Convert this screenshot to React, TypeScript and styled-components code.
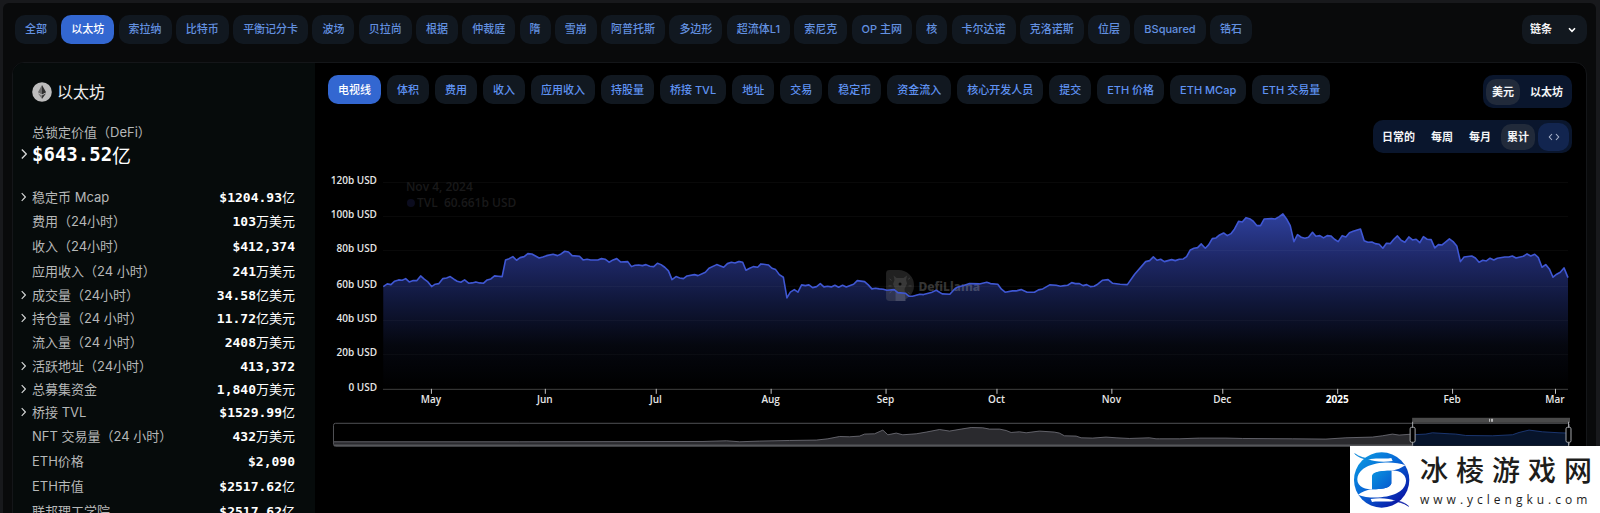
import React from "react";
import styled, { createGlobalStyle, css } from "styled-components";

const sans = `Inter, "Noto Sans CJK SC", sans-serif`;
const chartFont = `"Open Sans", "Noto Sans", sans-serif`;
const mono = `"DejaVu Sans Mono", "Noto Sans CJK SC", monospace`;

const GlobalStyle = createGlobalStyle`
  *, *::before, *::after { box-sizing: border-box; }
  body { margin: 0; background: #18191c; font-family: ${sans}; }
  button, select { font: inherit; }
`;

const Page = styled.div`
  height: 100vh;
  overflow: hidden;
  padding: 3px 4px 0 3px;
`;

const Shell = styled.div`
  min-height: 100%;
  padding: 12px 9px 0 9px;
  background: #090a0b;
  border-radius: 6px 6px 0 0;
`;

const TopBar = styled.header`
  display: flex;
  align-items: center;
  justify-content: space-between;
  padding-left: 3px;
`;

const ChainList = styled.nav`
  display: flex;
  justify-content: space-between;
  width: calc(100% - 335px);
  min-width: max-content;
`;

const pill = css`
  display: block;
  height: 29px;
  padding: 0 10px;
  border: 0;
  border-radius: 10px;
  font-size: 11px;
  line-height: 28px;
  font-weight: 500;
  white-space: nowrap;
  text-decoration: none;
`;

const ChainLink = styled.a<{ $active?: boolean }>`
  ${pill}
  background: ${(p) => (p.$active ? "#3367d1" : "#111820")};
  color: ${(p) => (p.$active ? "#ffffff" : "#6391e0")};
`;

const MetricButton = styled.button<{ $active?: boolean }>`
  ${pill}
  background: ${(p) => (p.$active ? "#3367d1" : "#111820")};
  color: ${(p) => (p.$active ? "#ffffff" : "#5f92f2")};
`;

const SelectBox = styled.label`
  display: grid;
  align-items: center;
  width: 65px;
  height: 29px;
  border-radius: 10px;
  background: #12181f;
  color: #f2f3f5;
  & > * { grid-area: 1 / 1; }
  svg { justify-self: end; margin-right: 10px; pointer-events: none; }
`;

const Select = styled.select`
  appearance: none;
  width: 100%;
  height: 29px;
  padding: 0 8px 2px;
  border: 0;
  background: transparent;
  color: inherit;
  font-size: 11px;
  font-weight: 600;
`;

const Card = styled.section`
  display: flex;
  margin-top: 18px;
  border: 1px solid #141619;
  border-radius: 12px;
  overflow: hidden;
  background: #000000;
`;

const Sidebar = styled.aside`
  flex: 0 0 302px;
  padding: 17px 20px 24px 8px;
  background: #060b0b;
  color: #b6b8b8;
`;

const ChainTitle = styled.h1`
  display: flex;
  align-items: center;
  gap: 5px;
  margin: 0 0 18px;
  padding-left: 11px;
  font-size: 16px;
  line-height: 24px;
  font-weight: 400;
  color: #eeeeee;
`;

const TvlLabel = styled.div`
  padding-left: 11px;
  font-size: 13px;
  line-height: 20px;
`;

const TvlValue = styled.div`
  display: flex;
  align-items: center;
  height: 24px;
  font-family: ${mono};
  font-size: 19px;
  font-weight: 700;
  color: #ffffff;
`;

const ChevronSlot = styled.span`
  display: flex;
  flex: 0 0 11px;
`;

const StatTable = styled.table`
  width: 100%;
  margin-top: 19px;
  border-collapse: collapse;
  font-size: 13px;
`;

const StatRow = styled.tr<{ $expandable?: boolean }>`
  height: ${(p) => (p.$expandable ? 23 : 25)}px;
`;

const StatName = styled.th`
  padding: 0;
  font-weight: 400;
  text-align: left;
  white-space: nowrap;
  line-height: 20px;
`;

const NameLine = styled.span`
  display: flex;
  align-items: center;
`;

const StatValue = styled.td`
  padding: 3px 0 0;
  font-family: ${mono};
  font-weight: 700;
  line-height: 18px;
  text-align: right;
  color: #ffffff;
  white-space: nowrap;
`;

const Unit = styled.span`
  font-weight: 400;
`;

const Main = styled.main`
  flex: 1;
  min-width: 0;
  padding: 12px 14px 0 13px;
`;

const Controls = styled.div`
  display: flex;
  align-items: flex-start;
  justify-content: space-between;
`;

const MetricList = styled.div`
  display: flex;
  gap: 6px;
`;

const IntervalLine = styled.div`
  display: flex;
  justify-content: flex-end;
  margin: 12px 0 17px;
`;

const ToggleGroup = styled.div`
  display: flex;
  align-items: center;
  height: 33px;
  padding: 0 3px;
  border-radius: 10px;
  background: #0a162d;
`;

const Toggle = styled.button<{ $active?: boolean }>`
  height: 26px;
  padding: 0 6px 2px;
  border: 0;
  border-radius: 10px;
  background: ${(p) => (p.$active ? "#212a3a" : "transparent")};
  color: #f4f5f7;
  font-size: 11px;
  font-weight: 600;
  white-space: nowrap;
  & + & { margin-left: 4px; }
`;

const EmbedButton = styled.button`
  display: flex;
  align-items: center;
  justify-content: center;
  width: 31px;
  height: 28px;
  margin-left: 3px;
  padding: 0;
  border: 0;
  border-radius: 10px;
  background: #12254f;
  color: #a9b4cc;
`;

const ChartSvg = styled.svg`
  display: block;
  width: 100%;
  height: auto;
  font-family: ${chartFont};
`;

const SiteBadge = styled.footer`
  position: fixed;
  right: 0;
  bottom: 0;
  display: flex;
  width: 250px;
  height: 67px;
  background: #ffffff;
  color: #1d1d1b;
`;

const BadgeText = styled.div`
  flex: 1;
  display: flex;
  flex-direction: column;
  padding: 6px 0 0 6px;
  white-space: nowrap;
`;

const BadgeName = styled.div`
  font-size: 28px;
  line-height: 38px;
  font-weight: 500;
  letter-spacing: 8px;
`;

const BadgeUrl = styled.div`
  font-family: "Open Sans", sans-serif;
  font-size: 12px;
  line-height: 20px;
  letter-spacing: 4px;
`;

const chains = [
  "全部", "以太坊", "索拉纳", "比特币", "平衡记分卡", "波场", "贝拉尚", "根据",
  "仲裁庭", "隋", "雪崩", "阿普托斯", "多边形", "超流体L1", "索尼克", "OP 主网",
  "核", "卡尔达诺", "克洛诺斯", "位层", "BSquared", "锆石",
];

const metrics = [
  "电视线", "体积", "费用", "收入", "应用收入", "持股量", "桥接 TVL", "地址", "交易",
  "稳定币", "资金流入", "核心开发人员", "提交", "ETH 价格", "ETH MCap", "ETH 交易量",
];

type Stat = { name: string; value: string; unit?: string; expandable?: boolean };

const stats: Stat[] = [
  { name: "稳定币 Mcap", value: "$1204.93", unit: "亿", expandable: true },
  { name: "费用（24小时）", value: "103", unit: "万美元" },
  { name: "收入（24小时）", value: "$412,374" },
  { name: "应用收入（24 小时）", value: "241", unit: "万美元" },
  { name: "成交量（24小时）", value: "34.58", unit: "亿美元", expandable: true },
  { name: "持仓量（24 小时）", value: "11.72", unit: "亿美元", expandable: true },
  { name: "流入量（24 小时）", value: "2408", unit: "万美元" },
  { name: "活跃地址（24小时）", value: "413,372", expandable: true },
  { name: "总募集资金", value: "1,840", unit: "万美元", expandable: true },
  { name: "桥接 TVL", value: "$1529.99", unit: "亿", expandable: true },
  { name: "NFT 交易量（24 小时）", value: "432", unit: "万美元" },
  { name: "ETH价格", value: "$2,090" },
  { name: "ETH市值", value: "$2517.62", unit: "亿" },
  { name: "联邦理工学院", value: "$2517.62", unit: "亿" },
];

const Chevron = ({ size }: { size: number }) => (
  <svg width={size} height={size * 2} viewBox="0 0 5 10" fill="none" aria-hidden="true">
    <path d="M0.7 1.2 4.4 5 0.7 8.8" stroke="#d5d7d7" strokeWidth="1.1" />
  </svg>
);

const EthIcon = () => (
  <svg width="20" height="20" viewBox="0 0 20 20" aria-hidden="true">
    <circle cx="10" cy="10" r="9.8" fill="#bdbdbd" />
    <path d="M10 3 5.9 10.2 10 12.4Z" fill="#6b6b6b" />
    <path d="M10 3 14.1 10.2 10 12.4Z" fill="#2e2e2e" />
    <path d="M5.9 11.2 10 17V13.5Z" fill="#7a7a7a" />
    <path d="M14.1 11.2 10 17V13.5Z" fill="#343434" />
  </svg>
);

// Series samples, three units per chart pixel, measured from the given origin.
type Series = { ox: number; oy: number; pts: string };

const tvl: Series[] = [
  {
    ox: 320, oy: 160,
    pts: "190,380 202,372 213,374 224,364 236,360 247,361 257,356 268,366 280,362 291,362 302,348 313,358 324,366 335,380 346,373 357,371 369,356 380,354 391,350 402,358 412,364 423,367 434,360 446,370 457,369 468,366 479,369 491,370 502,360 513,357 524,348 535,349 547,350 557,300 568,296 579,290 590,301 601,293 613,290 624,281 636,282 647,288 658,294 669,291 680,287 700,283 713,287 724,282 735,274 746,276 757,287 779,289 790,300 802,298 813,300 834,300 845,296 856,298 868,307 880,300 891,296 902,306 924,305 935,320 946,316 957,315 968,317 979,314 990,319 1002,320 1013,310 1024,314 1035,322 1046,333 1057,359 1069,350 1080,354 1091,356 1102,348 1124,344 1135,347 1157,337 1168,325 1191,314 1212,322 1223,311 1235,307 1246,309 1257,305",
  },
  {
    ox: 740, oy: 180,
    pts: "0,245 9,247 19,271 30,265 41,260 54,262 64,252 86,255 97,265 108,269 119,284 131,292 142,354 152,337 164,329 175,337 186,315 197,317 208,315 219,323 231,320 242,311 253,321 264,319 275,321 286,316 297,322 309,316 320,321 342,313 353,302 375,305 386,315 397,327 408,325 419,327 431,328 442,331 464,329 475,338 497,340 508,349 519,349 541,343 552,344 575,338 590,331 608,342 631,343 642,331 653,322 675,316 690,311 720,312 742,307 753,311 775,313 786,328 797,337 819,333 830,333 845,329 863,337 885,337 897,330 910,327 931,315 950,316 963,319 975,317 985,316 997,308 1008,311 1020,311 1031,317 1042,314 1053,320 1064,319 1075,313 1090,301 1106,299 1119,310 1142,313 1164,314 1186,283 1219,245 1231,242 1242,231 1253,241",
  },
  {
    ox: 1160, oy: 180,
    pts: "4,238 15,245 37,239 48,242 60,238 72,237 82,230 93,210 104,205 115,203 126,192 138,205 148,195 159,176 170,174 181,165 193,159 204,167 215,161 226,147 238,124 249,126 260,113 271,116 282,124 293,137 304,137 315,117 337,116 348,117 360,110 371,102 382,117 393,137 404,185 415,164 426,172 437,175 448,172 460,157 470,169 482,167 493,174 504,167 515,168 526,178 537,185 549,167 560,171 571,158 582,154 604,147 615,182 626,187 638,186 648,191 660,193 671,205 682,190 693,191 704,178 715,168 726,181 737,187 749,171 760,180 771,178 782,188 793,170 804,178 816,179 827,204 838,194 849,195 860,186 871,177 882,185 893,198 904,245 915,231 938,228 949,234 960,247 971,241 982,243 993,235 1004,240 1015,235 1037,231 1049,231 1060,228 1071,234 1093,229 1104,222 1115,228 1127,223 1138,233 1149,262 1160,254 1171,267 1182,292 1193,283 1204,277 1215,264 1227,293",
  },
];

const history: Series[] = [
  { ox: 320, oy: 160, pts: "42,846 600,846 1150,845 1220,843" },
  {
    ox: 740, oy: 180,
    pts: "0,786 60,784 150,782 230,781 265,777 300,770 330,771 360,769 375,763 405,762 430,751 445,765 470,760 490,765 530,762 560,757 600,749 630,754 665,748 695,743 730,744 750,748 780,748 800,752 815,758 840,756 860,759 900,754 945,757 960,760 975,768 1010,769 1025,774 1060,775 1100,772 1130,774 1170,776 1230,774 1250,777",
  },
  {
    ox: 1160, oy: 180,
    pts: "0,777 60,777 120,775 200,775 250,776 400,777 500,778 560,774 640,772 670,768 700,763 720,766 760,763",
  },
];

const selection: Series[] = [
  {
    ox: 1160, oy: 180,
    pts: "760,765 800,763 820,759 870,762 890,763 920,767 1000,768 1060,765 1080,758 1110,751 1150,756 1200,759 1228,760",
  },
];

const toPath = (series: Series[]) =>
  "M" +
  series
    .flatMap(({ ox, oy, pts }) =>
      pts.split(" ").map((p) => {
        const [x, y] = p.split(",").map(Number);
        return `${(ox + x / 3).toFixed(1)} ${(oy + y / 3).toFixed(1)}`;
      })
    )
    .join("L");

const yTicks = [
  { label: "120b USD", y: 182.5 },
  { label: "100b USD", y: 216.5 },
  { label: "80b USD", y: 250.5 },
  { label: "60b USD", y: 286.5 },
  { label: "40b USD", y: 320.5 },
  { label: "20b USD", y: 354.5 },
  { label: "0 USD", y: 389.5 },
];

const xTicks = [
  { label: "May", x: 431 }, { label: "Jun", x: 545 }, { label: "Jul", x: 656 },
  { label: "Aug", x: 771 }, { label: "Sep", x: 886 }, { label: "Oct", x: 997 },
  { label: "Nov", x: 1112 }, { label: "Dec", x: 1223 }, { label: "2025", x: 1338, bold: true },
  { label: "Feb", x: 1453 }, { label: "Mar", x: 1556 },
];

const Handle = ({ x }: { x: number }) => (
  <g stroke="#a5a7ab" fill="#000000">
    <path d={`M${x} 422V446`} />
    <rect x={x - 2.5} y="427.5" width="5" height="15" rx="1.5" />
  </g>
);

const TvlChart = () => {
  const line = toPath(tvl);
  const past = toPath(history);
  const picked = toPath(selection);
  return (
    <ChartSvg viewBox="328 170 1245 290" role="img" aria-label="TVL">
      <defs>
        <linearGradient id="tvlFill" gradientUnits="userSpaceOnUse" x1="0" y1="214" x2="0" y2="389">
          <stop offset="0" stopColor="#2e409c" />
          <stop offset="0.25" stopColor="#1e2868" />
          <stop offset="0.5" stopColor="#10173a" />
          <stop offset="0.75" stopColor="#05070f" />
          <stop offset="1" stopColor="#000000" />
        </linearGradient>
      </defs>

      <path d={`${line}V389H383.3Z`} fill="url(#tvlFill)" />
      {yTicks.map(({ label, y }) => (
        <g key={label}>
          <path d={`M383 ${y}H1569`} stroke="#ffffff" strokeOpacity={label === "0 USD" ? 0.25 : 0.045} />
          <text x="377" y={y + 2} textAnchor="end" fontSize="10" fontWeight="600" fill="#e6e6e6">{label}</text>
        </g>
      ))}
      {xTicks.map(({ label, x, bold }) => (
        <g key={label}>
          <path d={`M${x}.5 389V394`} stroke="#c4c4c4" />
          <text x={x} y="403" textAnchor="middle" fontSize="10" fontWeight={bold ? 700 : 600} fill={bold ? "#ffffff" : "#e6e6e6"}>
            {label}
          </text>
        </g>
      ))}

      <g opacity="0.24">
        <path d="M890 270H899A15.5 15.5 0 0 1 899 301H890A3.5 3.5 0 0 1 886.5 297.5V273.5A3.5 3.5 0 0 1 890 270Z" fill="#8a8a8a" />
        <path d="M894 275.5 897 278H904L907.5 275.5 906.5 280 907.5 283.5 905 289 906 301H896V290L893.5 284 895 280Z" fill="#e8e8e8" />
        <path d="M889 286H892M890 279 892 280.5M890 293 892 291.5M909 286H912M908.5 279.5 910.5 278M908.5 292 910.5 294" stroke="#f2f2f2" />
        <circle cx="900.5" cy="284" r="1.5" fill="#222222" />
        <text x="919" y="291" fontFamily='"Noto Sans", sans-serif' fontSize="12" fontWeight="800" fill="#d8d8d8">DefiLlama</text>
      </g>

      <path d={line} fill="none" stroke="#3f57d3" strokeWidth="1.6" strokeLinejoin="round" />

      <text x="406" y="191" fontSize="12" fontWeight="600" fill="#19191a">Nov 4, 2024</text>
      <circle cx="411" cy="203" r="4" fill="#0b0c1e" />
      <text x="417" y="207" fontSize="12" fontWeight="600" fill="#19191a">TVL</text>
      <text x="444" y="207" fontSize="12" fontWeight="600" fill="#19191a">60.661b USD</text>

      <path d={`${past}V446H334Z`} fill="#2a2a2e" />
      <path d={past} fill="none" stroke="#74747c" strokeWidth="0.8" />
      <path d={`${picked}V446H1413.3Z`} fill="#07142b" />
      <path d={picked} fill="none" stroke="#1d3a78" strokeWidth="0.9" />
      <rect x="333.5" y="423.5" width="1237" height="23" rx="2" fill="none" stroke="#505155" />
      <path d="M334 445.5H1413" stroke="#55565a" strokeWidth="1.5" />
      <rect x="1413" y="418" width="158" height="5" fill="#4a4a4a" />
      <path d="M1490.5 419V422M1492.5 419V422M1493.5 419V422" stroke="#d9d9d9" strokeWidth="0.8" />
      <Handle x={1413.5} />
      <Handle x={1569.5} />
    </ChartSvg>
  );
};

const SphereLogo = () => (
  <svg width="64" height="67" viewBox="0 0 192 201" aria-hidden="true">
    <defs>
      <linearGradient id="sphere" x1="0.1" y1="0.1" x2="0.85" y2="0.9">
        <stop offset="0" stopColor="#0a94e0" />
        <stop offset="0.45" stopColor="#0767d6" />
        <stop offset="1" stopColor="#0a16a6" />
      </linearGradient>
      <linearGradient id="core" x1="0" y1="0" x2="1" y2="1">
        <stop offset="0" stopColor="#0a94e0" />
        <stop offset="1" stopColor="#0759cf" />
      </linearGradient>
      <path id="swirl" d="M166 58C135 45 80 47 50 62C20 77 14 106 32 121C40 128 54 131 66 130V92C70 76 96 74 124 74C142 72 154 66 166 58Z" />
      <path id="flick" d="M54 40C80 35 108 40 124 36L128 45C98 50 70 46 54 40Z" />
    </defs>
    <circle cx="95" cy="102" r="83" fill="url(#sphere)" />
    <use href="#swirl" fill="#ffffff" />
    <use href="#swirl" fill="#ffffff" transform="rotate(180 95 102)" />
    <path d="M66 130V90C68 78 84 74 124 74V112C122 124 104 130 66 130Z" fill="url(#core)" />
    <use href="#flick" fill="#ffffff" />
    <use href="#flick" fill="#ffffff" transform="rotate(180 95 102)" />
    <path d="M14 23C30 34 46 38 62 38C48 42 28 36 14 23Z" fill="#0a86da" stroke="#0a86da" strokeWidth="2" />
    <path d="M176 181C160 170 144 166 128 166C142 162 162 168 176 181Z" fill="#0a1ca8" stroke="#0a1ca8" strokeWidth="2" />
  </svg>
);

export default function App() {
  return (
    <>
      <GlobalStyle />
      <Page>
        <Shell>
          <TopBar>
            <ChainList>
              {chains.map((name) => (
                <ChainLink key={name} href="#" $active={name === "以太坊"}>{name}</ChainLink>
              ))}
            </ChainList>
            <SelectBox>
              <Select aria-label="链条" defaultValue="链条">
                <option>链条</option>
              </Select>
              <svg width="10" height="8" viewBox="0 0 10 8" fill="none" aria-hidden="true">
                <path d="M2 2.3 5 5.3 8 2.3" stroke="#ffffff" strokeWidth="1.6" />
              </svg>
            </SelectBox>
          </TopBar>

          <Card>
            <Sidebar>
              <ChainTitle><EthIcon />以太坊</ChainTitle>
              <TvlLabel>总锁定价值（DeFi）</TvlLabel>
              <TvlValue>
                <ChevronSlot><Chevron size={6} /></ChevronSlot>
                $643.52<Unit>亿</Unit>
              </TvlValue>
              <StatTable>
                <tbody>
                  {stats.map((s) => (
                    <StatRow key={s.name} $expandable={s.expandable}>
                      <StatName scope="row">
                        <NameLine>
                          <ChevronSlot>{s.expandable && <Chevron size={5} />}</ChevronSlot>
                          {s.name}
                        </NameLine>
                      </StatName>
                      <StatValue>{s.value}{s.unit && <Unit>{s.unit}</Unit>}</StatValue>
                    </StatRow>
                  ))}
                </tbody>
              </StatTable>
            </Sidebar>

            <Main>
              <Controls>
                <MetricList>
                  {metrics.map((name, i) => (
                    <MetricButton key={name} type="button" $active={i === 0}>{name}</MetricButton>
                  ))}
                </MetricList>
                <ToggleGroup>
                  <Toggle type="button" $active>美元</Toggle>
                  <Toggle type="button">以太坊</Toggle>
                </ToggleGroup>
              </Controls>
              <IntervalLine>
                <ToggleGroup>
                  <Toggle type="button">日常的</Toggle>
                  <Toggle type="button">每周</Toggle>
                  <Toggle type="button">每月</Toggle>
                  <Toggle type="button" $active>累计</Toggle>
                  <EmbedButton type="button" aria-label="Embed">
                    <svg width="12" height="8" viewBox="0 0 12 8" fill="none" aria-hidden="true">
                      <path d="M4 1 1.3 4 4 7M8 1 10.7 4 8 7" stroke="currentColor" strokeWidth="1.1" />
                    </svg>
                  </EmbedButton>
                </ToggleGroup>
              </IntervalLine>
              <TvlChart />
            </Main>
          </Card>
        </Shell>
      </Page>
      <SiteBadge>
        <SphereLogo />
        <BadgeText>
          <BadgeName>冰棱游戏网</BadgeName>
          <BadgeUrl>www.yclengku.com</BadgeUrl>
        </BadgeText>
      </SiteBadge>
    </>
  );
}
